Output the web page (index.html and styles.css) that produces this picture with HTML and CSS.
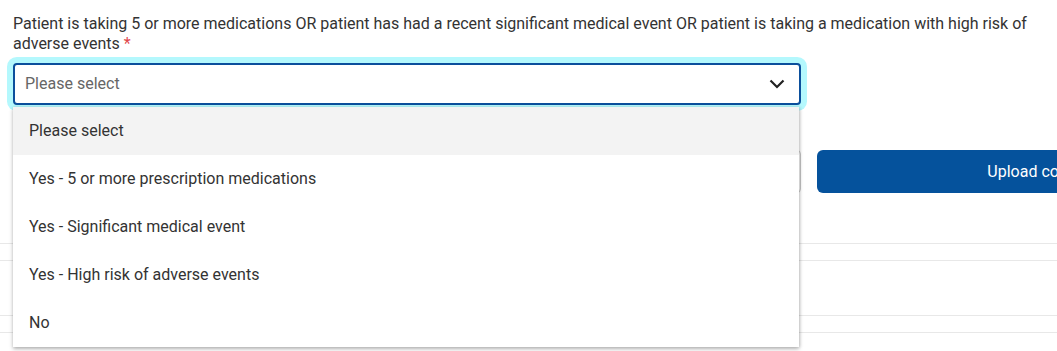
FILE: index.html
```html
<!DOCTYPE html>
<html lang="en">
<head>
<meta charset="utf-8">
<title>Form</title>
<link rel="stylesheet" href="styles.css">
</head>
<body>
<div class="page">
  <div class="form">
    <label class="label">Patient is taking 5 or more medications OR patient has had a recent significant medical event OR patient is taking a medication with high risk of adverse events <span class="req">*</span></label>
    <div class="select-wrap">
      <div class="select">
        <span class="placeholder">Please select</span>
        <svg class="chev" width="16" height="10" viewBox="0 0 16 10"><path d="M1.5 1.5 L8 8 L14.5 1.5" fill="none" stroke="#222" stroke-width="2.2"/></svg>
      </div>
      <ul class="menu">
        <li class="opt active">Please select</li>
        <li class="opt">Yes - 5 or more prescription medications</li>
        <li class="opt">Yes - Significant medical event</li>
        <li class="opt">Yes - High risk of adverse events</li>
        <li class="opt">No</li>
      </ul>
    </div>
    <div class="upload-row">
      <div class="file-box"></div>
      <button class="upload-btn">Upload consent form</button>
    </div>
  </div>
  <div class="rows">
    <div class="row r1"></div>
    <div class="row r2"></div>
    <div class="row r1"></div>
    <div class="row r2"></div>
  </div>
</div>
</body>
</html>
```
FILE: styles.css
```css
html, body {
  margin: 0;
  padding: 0;
  background: #fff;
  overflow: hidden;
}
body {
  font-family: Roboto, "Liberation Sans", Arial, sans-serif;
  color: #333;
  width: 1057px;
  height: 351px;
}
.page {
  padding-top: 14px;
}
.form {
  padding-left: 13px;
}
.label {
  display: block;
  font-size: 16px;
  line-height: 20px;
  color: #333;
  width: 1030px;
}
.req {
  color: #e0464b;
}
.select-wrap {
  position: relative;
  width: 788px;
  margin-top: 9px;
}
.select {
  box-sizing: border-box;
  height: 42px;
  border: 2px solid #0b4f9c;
  border-radius: 4px;
  box-shadow: 0 0 0 6px #b4f8fd;
  display: flex;
  align-items: center;
  justify-content: space-between;
  padding: 0 14px 1px 10px;
  background: #fff;
}
.placeholder {
  font-size: 16px;
  color: #666;
}
.chev {
  display: block;
  margin-top: 1px;
}
.menu {
  position: absolute;
  left: 0;
  top: 44px;
  width: 786px;
  margin: 0;
  padding: 0;
  list-style: none;
  background: #fff;
  box-shadow: 0 2px 4px rgba(0,0,0,0.28), 1px 0 3px rgba(0,0,0,0.12);
  z-index: 5;
}
.opt {
  height: 48px;
  line-height: 48px;
  padding-left: 16px;
  font-size: 16px;
  color: #333;
}
.opt.active {
  background: #f3f3f3;
}
.upload-row {
  display: flex;
  gap: 16px;
  margin-top: 45px;
  height: 43px;
}
.file-box {
  box-sizing: border-box;
  width: 788px;
  flex: none;
  border: 1px solid #c8c8c8;
  border-radius: 4px;
}
.upload-btn {
  flex: none;
  width: 490px;
  border: none;
  border-radius: 6px;
  background: #05529c;
  color: #fff;
  font-family: Roboto, "Liberation Sans", Arial, sans-serif;
  font-size: 16px;
  font-weight: 400;
  padding: 0;
}
.rows {
  margin-top: 50px;
}
.row {
  border-top: 1px solid #e8e8e8;
}
.r1 {
  height: 16px;
}
.r2 {
  height: 54px;
}
```
